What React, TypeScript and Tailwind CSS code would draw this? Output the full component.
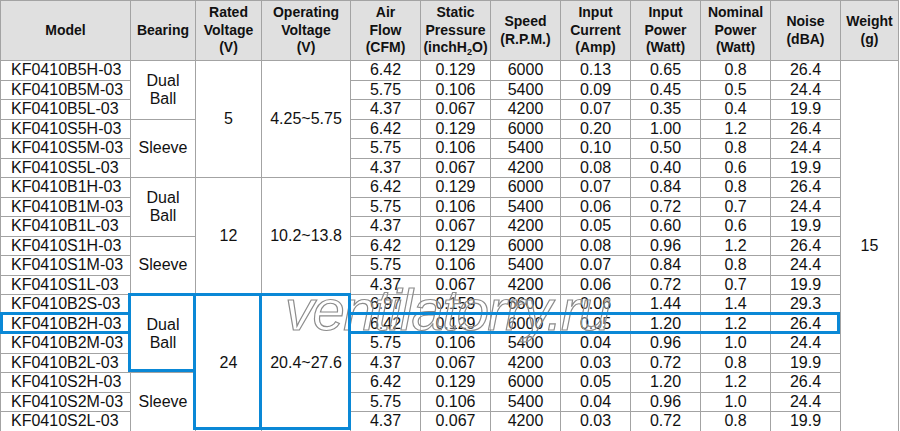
const rows = [
  ["KF0410B5H-03", "6.42", "0.129", "6000", "0.13", "0.65", "0.8", "26.4"],
  ["KF0410B5M-03", "5.75", "0.106", "5400", "0.09", "0.45", "0.5", "24.4"],
  ["KF0410B5L-03", "4.37", "0.067", "4200", "0.07", "0.35", "0.4", "19.9"],
  ["KF0410S5H-03", "6.42", "0.129", "6000", "0.20", "1.00", "1.2", "26.4"],
  ["KF0410S5M-03", "5.75", "0.106", "5400", "0.10", "0.50", "0.8", "24.4"],
  ["KF0410S5L-03", "4.37", "0.067", "4200", "0.08", "0.40", "0.6", "19.9"],
  ["KF0410B1H-03", "6.42", "0.129", "6000", "0.07", "0.84", "0.8", "26.4"],
  ["KF0410B1M-03", "5.75", "0.106", "5400", "0.06", "0.72", "0.7", "24.4"],
  ["KF0410B1L-03", "4.37", "0.067", "4200", "0.05", "0.60", "0.6", "19.9"],
  ["KF0410S1H-03", "6.42", "0.129", "6000", "0.08", "0.96", "1.2", "26.4"],
  ["KF0410S1M-03", "5.75", "0.106", "5400", "0.07", "0.84", "0.8", "24.4"],
  ["KF0410S1L-03", "4.37", "0.067", "4200", "0.06", "0.72", "0.7", "19.9"],
  ["KF0410B2S-03", "6.97", "0.159", "6600", "0.06", "1.44", "1.4", "29.3"],
  ["KF0410B2H-03", "6.42", "0.129", "6000", "0.05", "1.20", "1.2", "26.4"],
  ["KF0410B2M-03", "5.75", "0.106", "5400", "0.04", "0.96", "1.0", "24.4"],
  ["KF0410B2L-03", "4.37", "0.067", "4200", "0.03", "0.72", "0.8", "19.9"],
  ["KF0410S2H-03", "6.42", "0.129", "6000", "0.05", "1.20", "1.2", "26.4"],
  ["KF0410S2M-03", "5.75", "0.106", "5400", "0.04", "0.96", "1.0", "24.4"],
  ["KF0410S2L-03", "4.37", "0.067", "4200", "0.03", "0.72", "0.8", "19.9"],
]

const bearing: Record<number, [string[], number]> = {
  0: [["Dual", "Ball"], 3],
  3: [["Sleeve"], 3],
  6: [["Dual", "Ball"], 3],
  9: [["Sleeve"], 3],
  12: [["Dual", "Ball"], 4],
  16: [["Sleeve"], 3],
}

const voltage: Record<number, [string, string, number]> = {
  0: ["5", "4.25~5.75", 6],
  6: ["12", "10.2~13.8", 6],
  12: ["24", "20.4~27.6", 7],
}

const widths = [130, 65, 66, 89, 70, 70, 70, 70, 70, 70, 70, 58]

const cell = "border border-[#a3a3a3] text-center align-middle"

export default function App() {
  return (
    <div className="relative w-[900px] h-[431px] bg-white overflow-hidden font-['Liberation_Sans',Arial,sans-serif] text-[#111]">
      <table className="border-collapse table-fixed w-[899px]">
        <colgroup>
          {widths.map((w, i) => (
            <col key={i} style={{ width: w }} />
          ))}
        </colgroup>
        <thead>
          <tr className="h-[60px] bg-[#e0e0e0] text-[14px] font-bold leading-[17.5px]">
            <th className={cell}>Model</th>
            <th className={cell}>Bearing</th>
            <th className={cell}>Rated<br />Voltage<br />(V)</th>
            <th className={cell}>Operating<br />Voltage<br />(V)</th>
            <th className={cell}>Air<br />Flow<br />(CFM)</th>
            <th className={cell}>Static<br />Pressure<br />(inchH<sub className="text-[9px]">2</sub>O)</th>
            <th className={cell}>Speed<br />(R.P.M.)</th>
            <th className={cell}>Input<br />Current<br />(Amp)</th>
            <th className={cell}>Input<br />Power<br />(Watt)</th>
            <th className={cell}>Nominal<br />Power<br />(Watt)</th>
            <th className={cell}>Noise<br />(dBA)</th>
            <th className={cell}>Weight<br />(g)</th>
          </tr>
        </thead>
        <tbody className="text-[16px] leading-[18px]">
          {rows.map((r, i) => (
            <tr key={r[0]} className="h-[19.5px]">
              <td className="border border-[#a3a3a3] pl-[10px] align-middle whitespace-nowrap">{r[0]}</td>
              {bearing[i] && (
                <td rowSpan={bearing[i][1]} className={cell}>
                  {bearing[i][0].map((t) => (
                    <div key={t}>{t}</div>
                  ))}
                </td>
              )}
              {voltage[i] && (
                <>
                  <td rowSpan={voltage[i][2]} className={cell}>{voltage[i][0]}</td>
                  <td rowSpan={voltage[i][2]} className={cell}>{voltage[i][1]}</td>
                </>
              )}
              {r.slice(1).map((v, j) => (
                <td key={j} className={cell}>{v}</td>
              ))}
              {i === 0 && (
                <td rowSpan={19} className={cell}>15</td>
              )}
            </tr>
          ))}
        </tbody>
      </table>

      {/* watermark */}
      <div className="absolute left-[285px] top-[281px] text-[58px] leading-[58px] italic tracking-[-1.5px] whitespace-nowrap text-[rgba(255,255,255,0.3)] [-webkit-text-stroke:1.2px_#8c8c8c] pointer-events-none">
        ventilatorry.ru
      </div>

      <div className="absolute left-[128px] top-[293px] w-[68px] h-[79px] border-[3px] border-[#0a88d6]" />
      <div className="absolute left-[193px] top-[293px] w-[158px] h-[137px] border-[3px] border-[#0a88d6]" />
      <div className="absolute left-[259px] top-[293px] w-[3px] h-[137px] bg-[#0a88d6]" />
      <div className="absolute left-0 top-[312px] w-[131px] h-[22px] border-[3px] border-[#0a88d6]" />
      <div className="absolute left-[348px] top-[312px] w-[492px] h-[22px] border-[3px] border-[#0a88d6]" />
    </div>
  )
}
